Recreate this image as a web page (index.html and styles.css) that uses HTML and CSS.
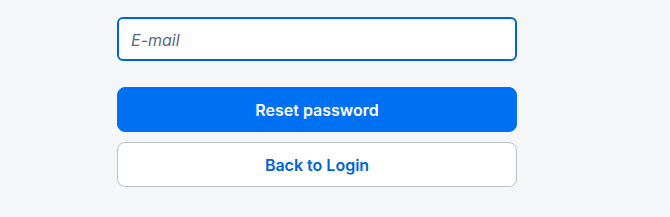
FILE: index.html
```html
<!DOCTYPE html>
<html lang="en">
<head>
    <meta charset="UTF-8">
    <title>Reset password</title>
    <link rel="stylesheet" href="styles.css">
</head>
<body>
    <div class="reset-form">
        <input type="email" class="email-input" placeholder="E-mail">
        <button class="btn btn-primary">Reset password</button>
        <button class="btn btn-secondary">Back to Login</button>
    </div>
</body>
</html>
```

FILE: styles.css
```css
body {
    margin: 0;
    background: #f5f6f7;
    font-family: Inter, "Noto Sans", sans-serif;
}

.reset-form {
    width: 400px;
    margin-left: 117px;
    padding-top: 17px;
    display: flex;
    flex-direction: column;
}

.email-input {
    height: 44px;
    box-sizing: border-box;
    border: 2px solid #0064d9;
    border-radius: 6px;
    background: #fff;
    padding: 2px 12px 0;
    font-family: inherit;
    font-size: 16px;
    outline: none;
}

.email-input::placeholder {
    color: #556b82;
    font-style: italic;
}

.btn {
    height: 45px;
    box-sizing: border-box;
    border-radius: 8px;
    font-family: inherit;
    font-size: 16px;
    font-weight: 600;
    cursor: pointer;
}

.btn-primary {
    margin-top: 26px;
    background: #0070f2;
    border: 1px solid #0070f2;
    color: #fff;
}

.btn-secondary {
    margin-top: 10px;
    background: #fff;
    border: 1px solid #bcc3ca;
    color: #0064d9;
}
```
